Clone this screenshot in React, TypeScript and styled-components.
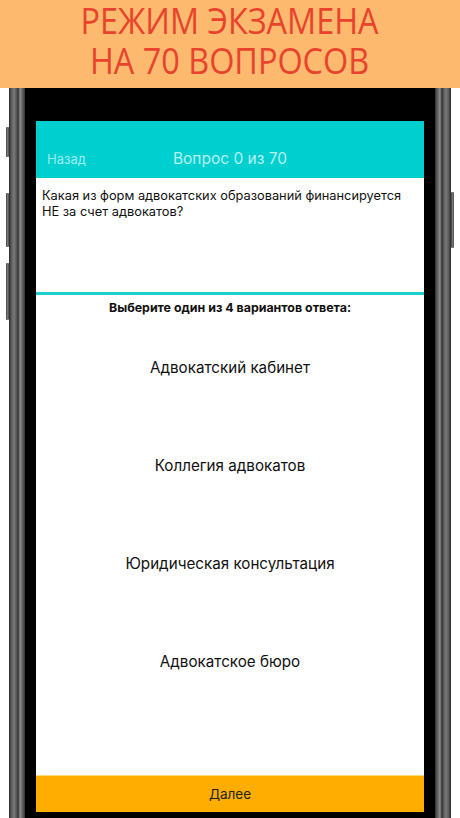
import React from 'react';
import styled, {createGlobalStyle} from 'styled-components';

const GlobalStyle = createGlobalStyle`
  html, body {
    margin: 0;
    padding: 0;
    background: #fff;
  }
  body {
    font-family: Inter, "Noto Sans", "Liberation Sans", sans-serif;
    overflow: hidden;
  }
`;

const Page = styled.div`
  display: flex;
  flex-direction: column;
  width: 460px;
  height: 818px;
  overflow: hidden;
  background: #fff;
`;

const Banner = styled.header`
  height: 88px;
  flex: none;
  background: #fdba6f;
  display: flex;
  align-items: center;
  justify-content: center;
  padding-bottom: 6px;
  box-sizing: border-box;
`;

// the banner lettering is a narrower face than Open Sans, so squeeze it a bit
const BannerText = styled.h1`
  margin: 0;
  color: #e9432d;
  font-family: "Open Sans", "Liberation Sans", sans-serif;
  font-weight: 400;
  font-size: 36px;
  line-height: 40px;
  text-align: center;
  white-space: nowrap;
  transform: scaleX(0.9);
`;

const PhoneArea = styled.div`
  position: relative;
  flex: 1;
  display: flex;
  padding: 0 9px;
  min-height: 0;
`;

const SideKey = styled.span<{$side: 'left' | 'right'; $top: number; $h: number}>`
  position: absolute;
  ${(p) => (p.$side === 'left' ? 'left: 6px;' : 'right: 6px;')}
  top: ${(p) => p.$top}px;
  height: ${(p) => p.$h}px;
  width: 3px;
  border-radius: 1px;
  background: linear-gradient(to right, #3a3a3a, #777, #4a4a4a);
`;

const frameEdge = '#262626 0, #565656 2px, #7a7a7a 5px, #505050 8px, #2e2e2e 9px, #8c8c8c 11px, #6a6a6a 13px, #333 16px';

const Frame = styled.div`
  flex: 1;
  display: flex;
  padding: 0 16px;
  background:
    linear-gradient(to right, ${frameEdge}) left / 16px 100% no-repeat,
    linear-gradient(to left, ${frameEdge}) right / 16px 100% no-repeat,
    #000;
`;

const Bezel = styled.div`
  flex: 1;
  display: flex;
  background: #000;
  padding: 33px 11px 6px;
`;

const Screen = styled.main`
  flex: 1;
  display: flex;
  flex-direction: column;
  background: #fff;
`;

const NavBar = styled.div`
  position: relative;
  height: 57px;
  flex: none;
  background: #00cfd0;
  display: flex;
  align-items: flex-end;
  justify-content: center;
  padding-bottom: 10px;
  box-sizing: border-box;
`;

const BackLink = styled.span`
  position: absolute;
  left: 11px;
  bottom: 11px;
  font-size: 13px;
  color: rgba(255, 255, 255, 0.62);
`;

const Title = styled.span`
  font-size: 15.5px;
  color: rgba(255, 255, 255, 0.72);
`;

const Question = styled.p`
  margin: 0;
  height: 117px;
  flex: none;
  box-sizing: border-box;
  padding: 10px 18px 8px 6px;
  font-size: 12.8px;
  line-height: 16px;
  color: #111;
  border-bottom: 3px solid #1ccfcf;
`;

const Prompt = styled.div`
  text-align: center;
  font-size: 12.4px;
  font-weight: 700;
  color: #111;
  padding-top: 5px;
  height: 23px;
  box-sizing: border-box;
`;

const Answers = styled.ul`
  list-style: none;
  margin: 0;
  padding: 0;
  flex: 1;
`;

const Answer = styled.li`
  height: 98px;
  display: flex;
  align-items: center;
  justify-content: center;
  font-size: 15.2px;
  color: #111;
`;

const NextButton = styled.button`
  flex: none;
  height: 37px;
  border: 0;
  margin: 0;
  background: #ffae00;
  font-family: inherit;
  font-size: 13.5px;
  color: #222;
  border-top: 1px solid #ffd97a;
`;

const answers = [
  'Адвокатский кабинет',
  'Коллегия адвокатов',
  'Юридическая консультация',
  'Адвокатское бюро',
];

export default function App() {
  return (
    <Page>
      <GlobalStyle />
      <Banner>
        <BannerText>
          РЕЖИМ ЭКЗАМЕНА
          <br />
          НА 70 ВОПРОСОВ
        </BannerText>
      </Banner>
      <PhoneArea>
        <SideKey $side="left" $top={39} $h={30} />
        <SideKey $side="left" $top={105} $h={54} />
        <SideKey $side="left" $top={175} $h={57} />
        <SideKey $side="right" $top={104} $h={56} />
        <Frame>
          <Bezel>
            <Screen>
              <NavBar>
                <BackLink>Назад</BackLink>
                <Title>Вопрос 0 из 70</Title>
              </NavBar>
              <Question>
                Какая из форм адвокатских образований финансируется НЕ за счет адвокатов?
              </Question>
              <Prompt>Выберите один из 4 вариантов ответа:</Prompt>
              <Answers>
                {answers.map((a) => (
                  <Answer key={a}>{a}</Answer>
                ))}
              </Answers>
              <NextButton>Далее</NextButton>
            </Screen>
          </Bezel>
        </Frame>
      </PhoneArea>
    </Page>
  );
}
